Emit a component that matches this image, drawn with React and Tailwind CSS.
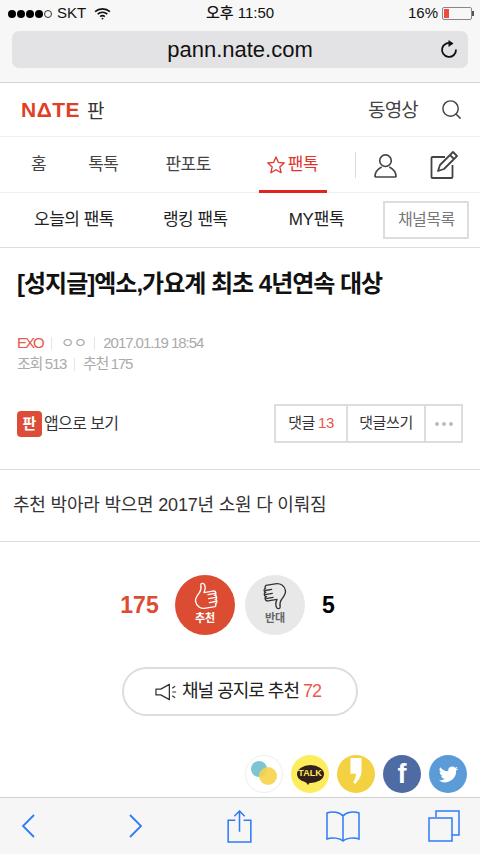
import { Search } from "lucide-react";

const font = { fontFamily: '"Liberation Sans", "Noto Sans CJK KR", sans-serif' };

function Thumb({ className, color }) {
  return (
    <svg viewBox="0 0 28 32" className={className} fill="none" stroke={color} strokeWidth="1.5" strokeLinejoin="round" strokeLinecap="round">
      <path d="M2 20c0-4 3-6 6-9 2-2 3-5 3-8 0-2 3-2 4 0 1 3 0 6-2 9h10c2 0 3 1 3 2.5S25 17 24 17c1 0 2 1 2 2.500s-1 2.500-2 2.500c1 0 1.500 1 1.500 2s-1 2.500-2 2.500c.5 .5 .5 2-1 3H12c-6 0-10-4-10-9.500z" />
      <path d="M17 15h8M17 19.500h8M17 24h7" />
    </svg>
  );
}

function Tab({ children, className = "" }) {
  return <span className={`text-[17px] tracking-[-0.5px] text-[#444] ${className}`}>{children}</span>;
}

export default function App() {
  return (
    <div style={font} className="w-[480px] h-[854px] overflow-hidden flex flex-col bg-white text-[#222]">
      {/* iOS status + url bar */}
      <div className="h-[83px] shrink-0 bg-[#f7f7f7] border-b border-[#d4d4d4] px-3">
        <div className="h-[27px] flex items-center justify-between -mx-1 text-[15px] text-[#111]">
          <div className="flex items-center gap-[1px] w-[150px]">
            {[0, 1, 2, 3].map((i) => (
              <span key={i} className="w-[8px] h-[8px] rounded-full bg-black" />
            ))}
            <span className="w-[8px] h-[8px] rounded-full border border-[#333]" />
            <span className="ml-[4px]">SKT</span>
            <svg viewBox="0 0 18 14" className="w-[17px] h-[13px] ml-[7px]" fill="none" stroke="#111" strokeWidth="1.800">
              <path d="M1 5c4.500-4 11.500-4 16 0M3.800 7.800c3-2.600 7.400-2.600 10.400 0M6.500 10.400c1.500-1.200 3.500-1.200 5 0" />
              <circle cx="9" cy="12.500" r="1" fill="#111" stroke="none" />
            </svg>
          </div>
          <span className="font-medium">오후 11:50</span>
          <div className="flex items-center justify-end gap-[4px] w-[150px]">
            <span>16%</span>
            <div className="w-[30px] h-[13px] border border-[#888] rounded-[2px] p-[1px] relative">
              <div className="w-[5px] h-full bg-[#ee4b3c]" />
              <span className="absolute -right-[3px] top-[3px] w-[2px] h-[5px] bg-[#555]" />
            </div>
          </div>
        </div>
        <div className="h-[37px] mt-[4px] rounded-[7px] bg-[#e3e3e5] relative flex items-center justify-center text-[22px] text-[#111]">
          pann.nate.com
          <svg viewBox="0 0 18 20" className="absolute right-[10px] top-[8px] w-[18px] h-[20px]" fill="none" stroke="#111" strokeWidth="1.800">
            <path d="M12 4.600A7 7 0 1 0 16 10.500" />
            <path d="M8.500 1l5 3.600-5 3.400z" fill="#111" stroke="none" />
          </svg>
        </div>
      </div>

      {/* page */}
      <div className="flex-1 min-h-0 overflow-hidden">
        <div className="h-[54px] border-b border-[#f0f0f0] flex items-center justify-between pl-[21px] pr-[17px]">
          <div className="flex items-center gap-[7px]">
            <span className="text-[21px] leading-none font-bold tracking-[0.5px] text-[#e23d25]">NΔTE</span>
            <span className="text-[19px] leading-none text-[#333] pt-[3px]">판</span>
          </div>
          <div className="flex items-center gap-[22px]">
            <span className="text-[19px] leading-none tracking-[-0.8px] text-[#444] pt-[2px]">동영상</span>
            <Search className="w-[23px] h-[23px] text-[#444]" strokeWidth={1.500} />
          </div>
        </div>

        <div className="h-[56px] pt-[1px] border-b border-[#f0f0f0] flex items-center relative">
          <Tab className="ml-[31px]">홈</Tab>
          <Tab className="ml-[42px]">톡톡</Tab>
          <Tab className="ml-[47px]">판포토</Tab>
          <div className="ml-[55px] h-full flex items-center gap-[2px] text-[#e2332a] relative">
            <svg viewBox="0 0 20 20" className="w-[20px] h-[20px]" fill="none" stroke="#e2332a" strokeWidth="1.300" strokeLinejoin="round">
              <path d="M10 2l2.400 5.400 5.800.6-4.400 3.900 1.300 5.800L10 14.700l-5.100 3 1.300-5.800L1.800 8l5.800-.6z" />
            </svg>
            <span className="text-[17px] tracking-[-0.5px]">팬톡</span>
            <span className="absolute -left-[7px] -right-[9px] -bottom-[1px] h-[3px] bg-[#e2231f]" />
          </div>
          <span className="ml-[37px] w-px h-[26px] bg-[#ddd]" />
          <svg viewBox="0 0 26 26" className="ml-[17px] w-[25px] h-[25px]" fill="none" stroke="#444" strokeWidth="1.700">
            <circle cx="13" cy="8" r="6" />
            <path d="M2 25c0-6 4-9 7-10.500M24 25c0-6-4-9-7-10.500M2 25h22" />
          </svg>
          <svg viewBox="0 0 30 30" className="ml-[31px] w-[30px] h-[30px]" fill="none" stroke="#444" strokeWidth="1.800" strokeLinejoin="round">
            <path d="M16 7H3.500a1 1 0 0 0-1 1v19a1 1 0 0 0 1 1h19a1 1 0 0 0 1-1V15" />
            <path d="M24 2l4 4-13 13-6 2 2-6zM21 5l4 4" />
          </svg>
        </div>

        <div className="h-[55px] border-b border-[#ddd] flex items-center text-[#222] relative">
          <span className="ml-[34px] text-[17px] tracking-[-0.5px]">오늘의 팬톡</span>
          <span className="ml-[49px] text-[17px] tracking-[-0.5px]">랭킹 팬톡</span>
          <span className="ml-[61px] text-[17px] tracking-[-0.3px]">MY팬톡</span>
          <span className="ml-[39px] w-[86px] h-[38px] border-2 border-[#ddd] flex items-center justify-center text-[16px] tracking-[-0.5px] text-[#777]">
            채널목록
          </span>
        </div>

        <div className="px-[17px] pt-[20px]">
          <h1 className="text-[24px] leading-[32px] font-bold tracking-[-1px] text-[#111]">[성지글]엑소,가요계 최초 4년연속 대상</h1>
          <div className="mt-[33px] flex items-center text-[15px] leading-[20px] tracking-[-1.050px] text-[#aaa]">
            <span className="text-[#e8584c] tracking-[-2px]">EXO</span>
            <span className="ml-[8px] mr-[9px] w-px h-[13px] bg-[#e5e5e5]" />
            <span className="tracking-[-1px]">ㅇㅇ</span>
            <span className="ml-[8px] mr-[8px] w-px h-[13px] bg-[#e5e5e5]" />
            <span>2017.01.19 18:54</span>
          </div>
          <div className="mt-[1px] flex items-center text-[15px] leading-[20px] tracking-[-1.300px] text-[#aaa]">
            <span>조회 513</span>
            <span className="mx-[8px] w-px h-[13px] bg-[#e5e5e5]" />
            <span>추천 175</span>
          </div>
          <div className="mt-[30px] flex items-center justify-between">
            <div className="flex items-center gap-[2px]">
              <span className="w-[25px] h-[26px] rounded-[4px] bg-[#dc4c38] flex items-center justify-center text-white text-[15px] font-bold leading-none">판</span>
              <span className="text-[16px] tracking-[-0.6px] text-[#333]">앱으로 보기</span>
            </div>
            <div className="h-[39px] flex border-2 border-[#ddd] text-[15px] tracking-[-0.4px] text-[#333]">
              <span className="w-[70px] flex items-center justify-center gap-[3px]">
                댓글 <span className="text-[#e8584c]">13</span>
              </span>
              <span className="w-[78px] border-l-2 border-[#ddd] flex items-center justify-center">댓글쓰기</span>
              <span className="w-[37px] border-l-2 border-[#ddd] flex items-center justify-center gap-[3px]">
                {[0, 1, 2].map((i) => (
                  <span key={i} className="w-[4px] h-[4px] rounded-full bg-[#bbb]" />
                ))}
              </span>
            </div>
          </div>
        </div>

        <div className="mt-[26px] h-[73px] border-y border-[#ddd] px-[13px] flex items-center text-[18px] tracking-[-0.2px] text-[#333]">
          추천 박아라 박으면 2017년 소원 다 이뤄짐
        </div>

        <div className="mt-[33px] flex items-center justify-center pr-[26px]">
          <span className="w-[39px] text-[23px] font-bold text-[#dc4c32] text-center">175</span>
          <div className="ml-[16px] w-[60px] h-[60px] rounded-full bg-[#dc4c32] flex flex-col items-center pt-[6px]">
            <Thumb className="w-[25px] h-[30px] -rotate-[10deg]" color="#fff" />
            <span className="text-[11px] leading-[14px] font-bold text-white">추천</span>
          </div>
          <div className="ml-[10px] w-[60px] h-[60px] rounded-full bg-[#e8e8e8] flex flex-col items-center pt-[6px]">
            <Thumb className="w-[25px] h-[30px] rotate-[170deg]" color="#333" />
            <span className="text-[11px] leading-[14px] font-bold text-[#666]">반대</span>
          </div>
          <span className="ml-[17px] w-[12px] text-[23px] font-bold text-black text-center">5</span>
        </div>

        <div className="mt-[32px] flex justify-center">
          <div className="w-[236px] h-[49px] pr-[4px] rounded-full border-2 border-[#ddd] flex items-center justify-center gap-[4px] text-[18px] tracking-[-1px] text-[#222]">
            <svg viewBox="0 0 24 18" className="w-[23px] h-[18px]" fill="none" stroke="#333" strokeWidth="1.300" strokeLinejoin="round">
              <path d="M1 6h5l9-5v16l-9-5H1z" />
              <path d="M18 5l3-2M18 9h4M18 13l3 2" />
            </svg>
            채널 공지로 추천 <span className="text-[#e8584c]">72</span>
          </div>
        </div>

        <div className="mt-[39px] flex justify-end gap-[8px] pr-[13px]">
          <div className="w-[38px] h-[38px] rounded-full border border-[#eee] relative overflow-hidden">
            <span className="absolute left-[5px] top-[5px] w-[16px] h-[16px] rounded-full bg-[#7cc6d4]" />
            <span className="absolute left-[13px] top-[11px] w-[18px] h-[18px] rounded-full bg-[#f7d348]/90" />
          </div>
          <div className="w-[38px] h-[38px] rounded-full bg-[#fdec5c] flex items-center justify-center relative">
            <span className="w-[27px] h-[18px] rounded-[50%] bg-[#33201a] flex items-center justify-center text-[9px] font-bold text-[#fdec5c]">TALK</span>
            <span className="absolute left-[14px] top-[26px] w-0 h-0 border-l-[3px] border-r-[3px] border-t-[4px] border-l-transparent border-r-transparent border-t-[#33201a]" />
          </div>
          <div className="w-[38px] h-[38px] rounded-full bg-[#f3d140] flex items-start justify-center overflow-hidden">
            <svg viewBox="0 0 12 28" className="w-[12px] h-[26px] mt-[3px]" fill="#fff">
              <path d="M0 0h12v14c0 5-3 10-7 14l-2-2c2-3 3-6 3-9H0z" />
            </svg>
          </div>
          <div className="w-[38px] h-[38px] rounded-full bg-[#4f6ba3] flex items-center justify-center overflow-hidden">
            <span className="text-[27px] leading-none font-bold text-white">f</span>
          </div>
          <div className="w-[38px] h-[38px] rounded-full bg-[#5b9bd8] flex items-center justify-center">
            <svg viewBox="0 0 24 24" className="w-[21px] h-[21px]" fill="#fff">
              <path d="M23 5c-.8.400-1.700.600-2.600.700.900-.600 1.600-1.400 2-2.500-.900.500-1.800.900-2.900 1.100A4.500 4.500 0 0 0 11.800 8.400 12.800 12.800 0 0 1 2.500 3.700a4.500 4.500 0 0 0 1.400 6c-.700 0-1.400-.200-2-.500 0 2.200 1.500 4 3.600 4.500-.700.200-1.400.200-2 .100.600 1.800 2.200 3.100 4.200 3.100A9 9 0 0 1 1 18.800 12.700 12.700 0 0 0 20.700 7.500c.900-.600 1.700-1.500 2.300-2.500z" />
            </svg>
          </div>
        </div>
      </div>

      {/* safari toolbar */}
      <div className="h-[57px] shrink-0 bg-[#f6f6f7] border-t border-[#cfcfcf] flex items-center pl-[21px]">
        <svg viewBox="0 0 14 24" className="w-[14px] h-[24px]" fill="none" stroke="#2f7bf6" strokeWidth="1.800">
          <path d="M13 1L2 12l11 11" />
        </svg>
        <svg viewBox="0 0 14 24" className="ml-[94px] w-[14px] h-[24px]" fill="none" stroke="#2f7bf6" strokeWidth="1.800">
          <path d="M1 1l11 11L1 23" />
        </svg>
        <svg viewBox="0 0 24 32" className="ml-[84px] w-[25px] h-[33px]" fill="none" stroke="#2f7bf6" strokeWidth="1.500">
          <path d="M8 10H1v21h22V10h-7M12 21V2M7 6l5-5 5 5" />
        </svg>
        <svg viewBox="0 0 34 32" className="ml-[74px] w-[34px] h-[32px]" fill="none" stroke="#2f7bf6" strokeWidth="1.500">
          <path d="M17 6C14 2 6 1 1 3v26c5-2 13-1 16 2 3-3 11-4 16-2V3c-5-2-13-1-16 3zM17 6v25" />
        </svg>
        <svg viewBox="0 0 32 32" className="ml-[68px] w-[32px] h-[32px]" fill="none" stroke="#2f7bf6" strokeWidth="1.500">
          <path d="M8 7V1h23v24h-7M1 8h23v23H1z" />
        </svg>
      </div>
    </div>
  );
}
